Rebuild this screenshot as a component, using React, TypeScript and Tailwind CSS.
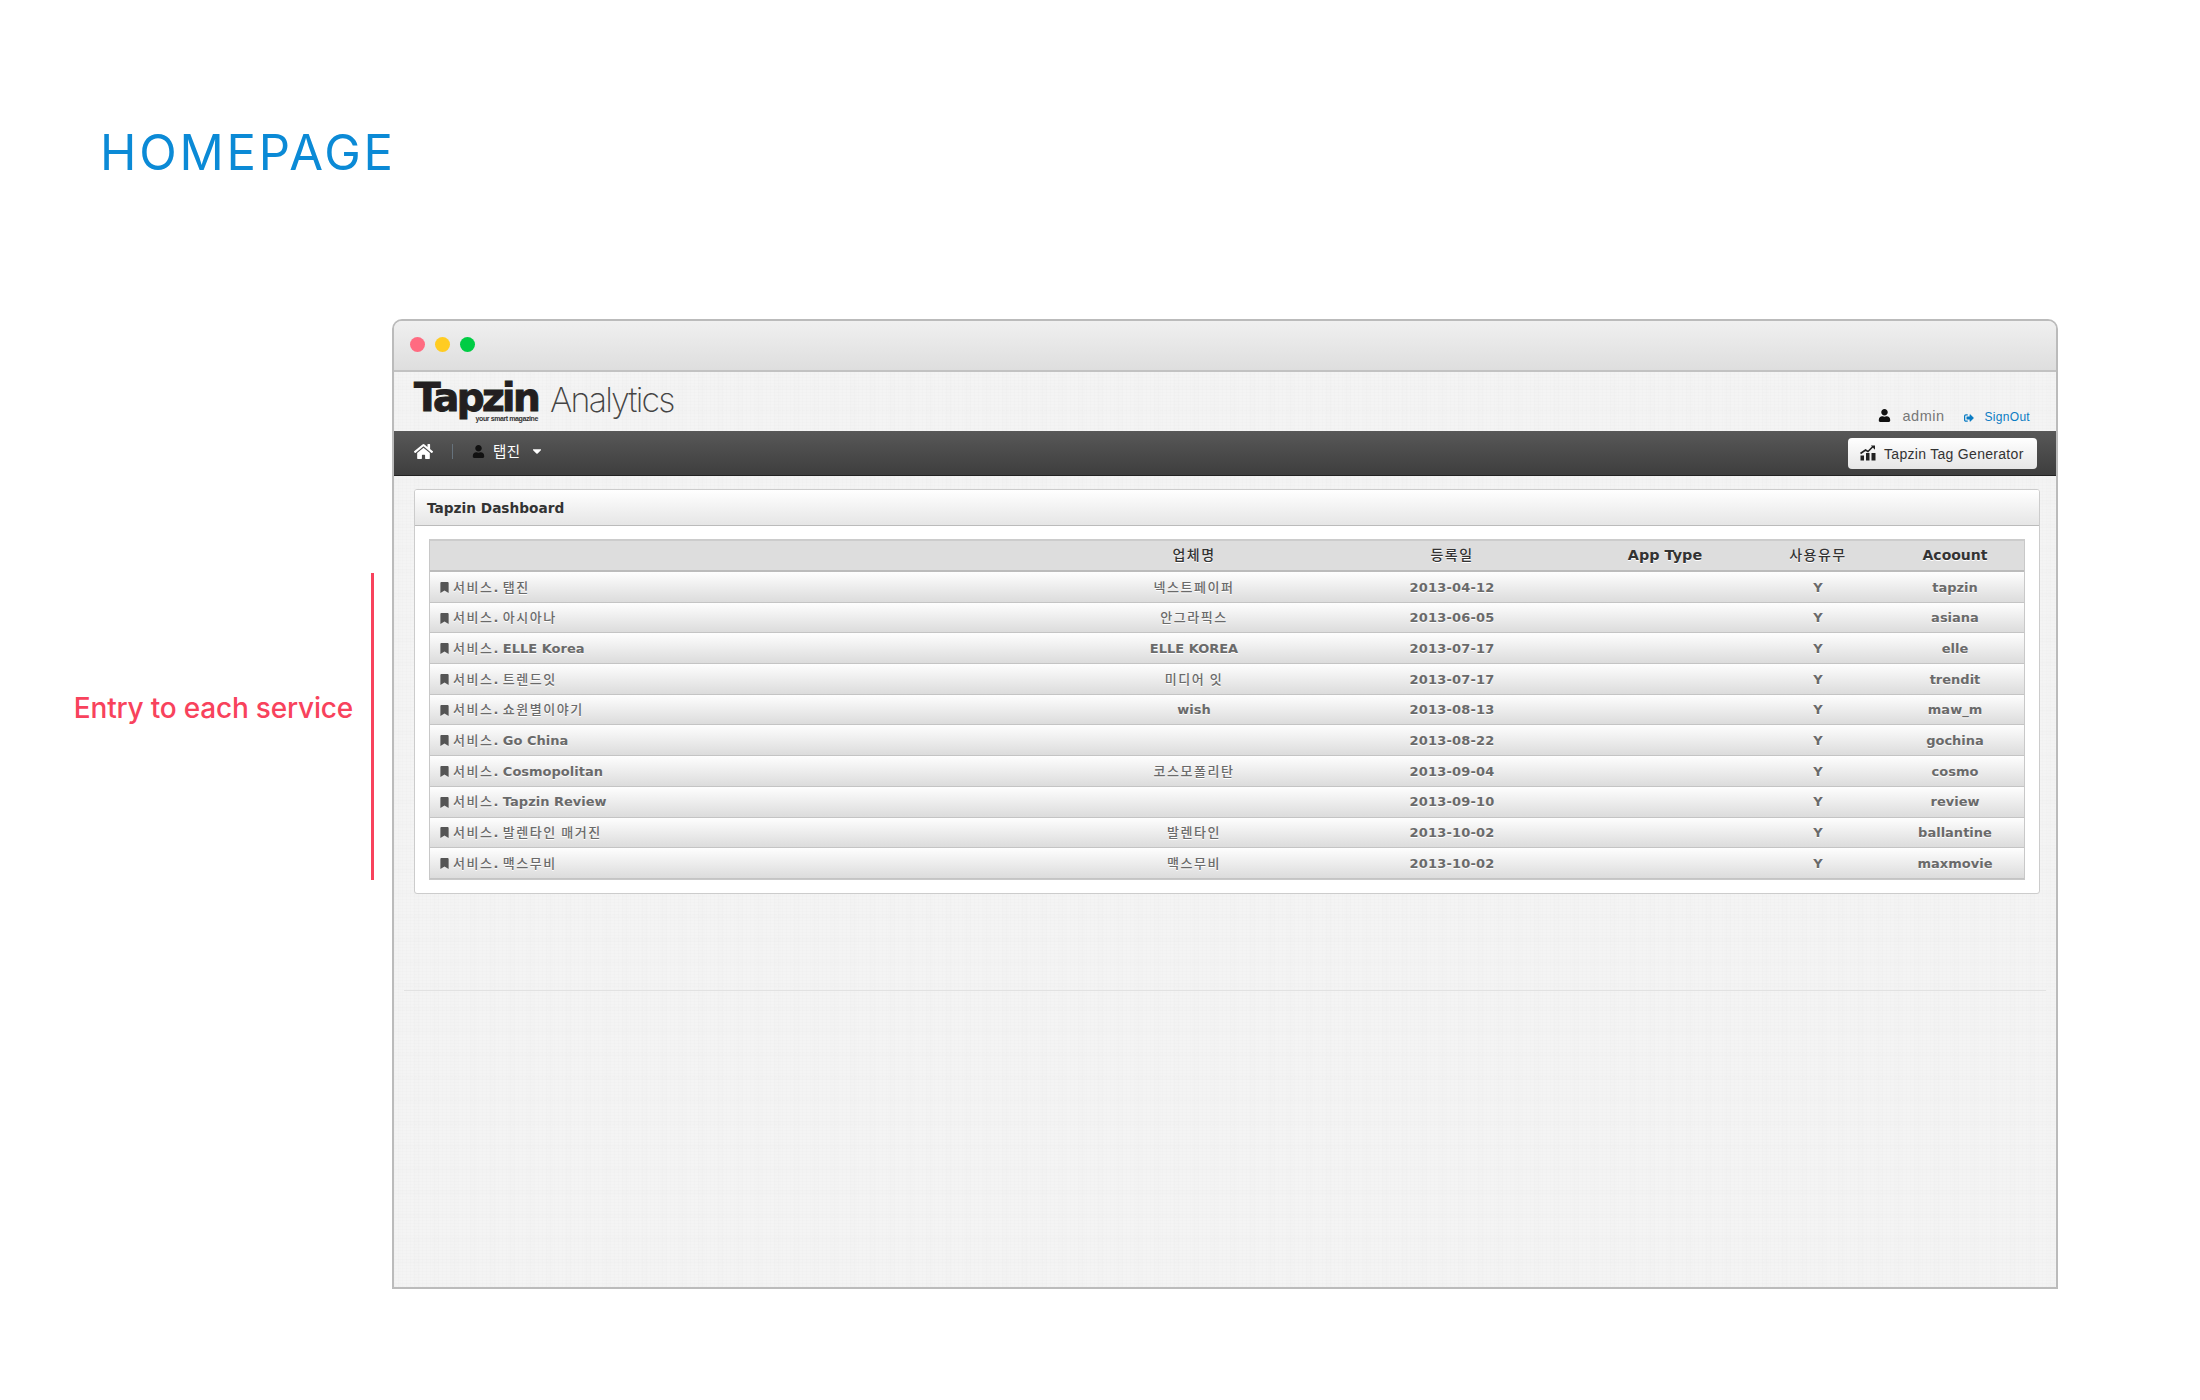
import React from "react";
import { FaHome, FaUser, FaCaretDown, FaBookmark, FaSignOutAlt } from "react-icons/fa";

const rows: [string, string, string, string][] = [
  ["탭진", "넥스트페이퍼", "2013-04-12", "tapzin"],
  ["아시아나", "안그라픽스", "2013-06-05", "asiana"],
  ["ELLE Korea", "ELLE KOREA", "2013-07-17", "elle"],
  ["트렌드잇", "미디어 잇", "2013-07-17", "trendit"],
  ["쇼윈별이야기", "wish", "2013-08-13", "maw_m"],
  ["Go China", "", "2013-08-22", "gochina"],
  ["Cosmopolitan", "코스모폴리탄", "2013-09-04", "cosmo"],
  ["Tapzin Review", "", "2013-09-10", "review"],
  ["발렌타인 매거진", "발렌타인", "2013-10-02", "ballantine"],
  ["맥스무비", "맥스무비", "2013-10-02", "maxmovie"],
];

function Txt({ text }: { text: string }) {
  return (
    <>
      {text.split(/([가-힣]+)/).map((p, i) =>
        /[가-힣]/.test(p) ? (
          <span key={i} className="font-medium text-[13px] tracking-[1.5px]">{p}</span>
        ) : (
          <span key={i}>{p}</span>
        )
      )}
    </>
  );
}

const cols = "grid grid-cols-[634px_260px_256px_170px_136px_1fr] items-center text-center";
const texture =
  "bg-[#f4f4f4] bg-[image:repeating-linear-gradient(0deg,rgba(0,0,0,0.008)_0px,rgba(0,0,0,0.008)_1px,transparent_1px,transparent_3px),repeating-linear-gradient(90deg,rgba(0,0,0,0.008)_0px,rgba(0,0,0,0.008)_1px,transparent_1px,transparent_4px),repeating-linear-gradient(90deg,rgba(0,0,0,0.004)_0px,rgba(0,0,0,0.004)_7px,transparent_7px,transparent_19px),repeating-linear-gradient(0deg,rgba(0,0,0,0.004)_0px,rgba(0,0,0,0.004)_5px,transparent_5px,transparent_23px)]";

export default function App() {
  return (
    <div className="w-[2200px] h-[1400px] bg-white overflow-hidden font-['DejaVu_Sans','Noto_Sans_CJK_KR',sans-serif]">
      <h1 className="ml-[100px] pt-[123px] h-[319px] text-[49px] leading-[60px] font-normal text-[#0b8ad6] font-['Inter',sans-serif] tracking-[2.8px]">
        HOMEPAGE
      </h1>
      <div className="flex">
        <div className="w-[392px] pt-[254px]">
          <div className="flex items-stretch justify-end h-[307px] pr-[18px]">
            <span className="self-center mb-[38px] text-[28px] font-medium text-[#f8425c] font-['Inter',sans-serif] tracking-[-0.2px] whitespace-nowrap">
              Entry to each service
            </span>
            <div className="ml-[18px] w-[3px] bg-[#f8425c]" />
          </div>
        </div>

        <div className={`w-[1666px] h-[970px] border-2 border-[#bbbbbb] rounded-t-[10px] overflow-hidden flex flex-col ${texture}`}>
          <div className="h-[51px] shrink-0 flex items-center gap-[10px] pl-[16px] pb-[2px] bg-gradient-to-b from-[#f0f0f0] to-[#dedede] border-b-2 border-[#c2c2c2]">
            <span className="w-[15px] h-[15px] rounded-full bg-[#ff6b81]" />
            <span className="w-[15px] h-[15px] rounded-full bg-[#ffcc22]" />
            <span className="w-[15px] h-[15px] rounded-full bg-[#00cc44]" />
          </div>

          <header className="h-[59px] shrink-0 flex justify-between pl-[20px] pr-[26px]">
            <div className="flex items-start">
              <div className="relative w-[126px] h-[59px]">
                <span className="block mt-[10px] text-[39px] leading-[32px] font-bold text-[#231f20] tracking-[-2.6px] [-webkit-text-stroke:1px_#231f20]">
                  Tapzin
                </span>
                <span className="absolute right-[2px] top-[42px] text-[7px] leading-[9px] font-bold text-[#333] tracking-[-0.4px] whitespace-nowrap font-['Liberation_Sans',sans-serif]">
                  your smart magazine
                </span>
              </div>
              <span className="ml-[10px] mt-[7px] text-[34px] leading-[42px] font-extralight text-[#444] tracking-[-1.8px] font-['Inter',sans-serif]">
                Analytics
              </span>
            </div>
            <div className="flex items-end pb-[6px]">
              <FaUser className="text-[13px] text-[#111] mb-[3px]" />
              <span className="ml-[12px] text-[14.5px] leading-[18px] text-[#777] font-['Liberation_Sans',sans-serif] tracking-[0.5px]">admin</span>
              <FaSignOutAlt className="ml-[19px] text-[10px] text-[#0a7cc4] mb-[2px]" />
              <span className="ml-[11px] text-[12px] leading-[16px] text-[#0a7cc4] font-['Liberation_Sans',sans-serif] tracking-[0.3px]">SignOut</span>
            </div>
          </header>

          <nav className="h-[45px] shrink-0 flex items-center justify-between pl-[20px] pr-[19px] bg-gradient-to-b from-[#585858] to-[#3e3e3e] border-b border-[#222]">
            <div className="flex items-center -mt-[4px]">
              <FaHome className="text-[19px] text-white" />
              <span className="ml-[19px] w-px h-[15px] bg-[#66727c]" />
              <FaUser className="ml-[19px] text-[13px] text-[#111]" />
              <span className="ml-[8px] text-[14.5px] font-normal text-white tracking-[0.5px] font-['Noto_Sans_CJK_KR',sans-serif]">탭진</span>
              <FaCaretDown className="ml-[9px] text-[14px] text-white" />
            </div>
            <button className="flex items-center w-[189px] h-[31px] pl-[12px] pt-px mt-[1px] rounded-[4px] bg-gradient-to-b from-white to-[#e6e6e6] text-[14px] tracking-[0.3px] text-[#333] font-['Liberation_Sans',sans-serif]">
              <svg viewBox="0 0 16 16" className="w-[16px] h-[16px] mr-[8px] -mt-[3px]" fill="#222">
                <rect x="0.5" y="10.5" width="3.5" height="5" />
                <rect x="6" y="8" width="3.5" height="7.5" />
                <rect x="11.5" y="8" width="4" height="7.5" />
                <path d="M0.5 8.5 L5.5 5 L8 6.5 L13 1.5" fill="none" stroke="#222" strokeWidth="1.6" />
                <path d="M10.8 0.5 H15 V4.7 Z" />
              </svg>
              Tapzin Tag Generator
            </button>
          </nav>

          <main className="px-[20px] pt-[13px]">
            <section className="w-[1626px] h-[405px] bg-white border border-[#cccccc] rounded-[3px] overflow-hidden">
              <div className="h-[36px] flex items-center pl-[12px] pt-px bg-gradient-to-b from-white to-[#e6e6e6] border-b border-[#bbbbbb] text-[13.7px] font-bold text-[#333]">
                Tapzin Dashboard
              </div>
              <div className="mx-[14px] mt-[13px] border border-t-2 border-[#c8c8c8] border-t-[#cccccc] text-[13px]">
                <div className={`${cols} h-[31px] bg-[#dddddd] border-b-2 border-[#bbbbbb] font-bold text-[14px] text-[#333] [text-shadow:0_1px_0_#fff]`}>
                  <span />
                  <span className="font-medium tracking-[1.5px]">업체명</span>
                  <span className="font-medium tracking-[1.5px]">등록일</span>
                  <span className="text-[14.4px]">App Type</span>
                  <span className="font-medium tracking-[1.5px]">사용유무</span>
                  <span>Acoount</span>
                </div>
                {rows.map((r) => (
                  <div
                    key={r[3]}
                    className={`${cols} h-[30.7px] pt-px bg-gradient-to-b from-[#fefefe] to-[#dcdcdc] border-b border-[#c4c4c4] font-bold text-[#6a6a6a] [text-shadow:0_1px_0_#fff]`}
                  >
                    <span className="flex items-center pl-[9px] text-left">
                      <FaBookmark className="text-[11px] text-[#555] mr-[3px]" />
                      <span>
                        <Txt text="서비스. " />
                        <Txt text={r[0]} />
                      </span>
                    </span>
                    <span><Txt text={r[1]} /></span>
                    <span className="tracking-[0.2px]">{r[2]}</span>
                    <span />
                    <span>Y</span>
                    <span>{r[3]}</span>
                  </div>
                ))}
              </div>
            </section>
            <hr className="-mx-[10px] mt-[96px] border-t border-[#e2e2e2]" />
          </main>
        </div>
      </div>
    </div>
  );
}
